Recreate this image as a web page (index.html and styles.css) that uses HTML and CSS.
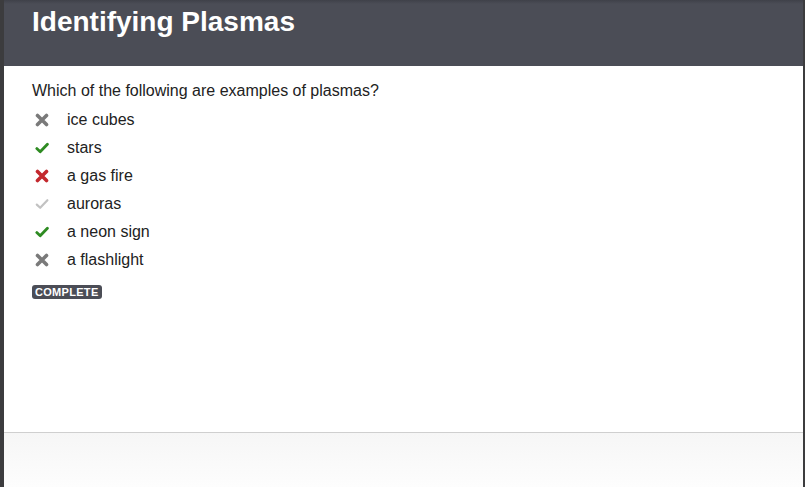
FILE: index.html
```html
<!DOCTYPE html>
<html>
<head>
<meta charset="utf-8">
<link rel="stylesheet" href="styles.css">
</head>
<body>
<div class="frame">
  <header class="header">
    <h1 class="title">Identifying Plasmas</h1>
  </header>
  <main class="content">
    <p class="question">Which of the following are examples of plasmas?</p>
    <ul class="answers">
      <li class="answer"><span class="icon"><svg viewBox="0 0 14 14" width="14" height="14"><path d="M2.5 2.5 L11.5 11.5 M11.5 2.5 L2.5 11.5" stroke="#7a7a7a" stroke-width="3.6" stroke-linecap="round"/></svg></span>ice cubes</li>
      <li class="answer"><span class="icon"><svg viewBox="0 0 14 14" width="14" height="14"><path d="M1.8 7.6 L5.2 10.8 L12.4 3.2" fill="none" stroke="#2e8b22" stroke-width="2.8" stroke-linecap="round" stroke-linejoin="round"/></svg></span>stars</li>
      <li class="answer"><span class="icon"><svg viewBox="0 0 14 14" width="14" height="14"><path d="M2.5 2.5 L11.5 11.5 M11.5 2.5 L2.5 11.5" stroke="#c3282d" stroke-width="3.6" stroke-linecap="round"/></svg></span>a gas fire</li>
      <li class="answer"><span class="icon"><svg viewBox="0 0 14 14" width="14" height="14"><path d="M1.8 7.6 L5.2 10.8 L12.4 3.2" fill="none" stroke="#c2c2c2" stroke-width="2.2" stroke-linecap="round" stroke-linejoin="round"/></svg></span>auroras</li>
      <li class="answer"><span class="icon"><svg viewBox="0 0 14 14" width="14" height="14"><path d="M1.8 7.6 L5.2 10.8 L12.4 3.2" fill="none" stroke="#2e8b22" stroke-width="2.8" stroke-linecap="round" stroke-linejoin="round"/></svg></span>a neon sign</li>
      <li class="answer"><span class="icon"><svg viewBox="0 0 14 14" width="14" height="14"><path d="M2.5 2.5 L11.5 11.5 M11.5 2.5 L2.5 11.5" stroke="#7a7a7a" stroke-width="3.6" stroke-linecap="round"/></svg></span>a flashlight</li>
    </ul>
    <span class="badge">COMPLETE</span>
  </main>
  <footer class="footer"></footer>
</div>
</body>
</html>
```
FILE: styles.css
```css
html, body {
  margin: 0;
  padding: 0;
  height: 100%;
}
body {
  font-family: "Liberation Sans", Arial, sans-serif;
  background: #ffffff;
}
.frame {
  height: 487px;
  box-sizing: border-box;
  border-left: 4px solid #3c3c3e;
  border-right: 2px solid #3c3c3e;
  display: flex;
  flex-direction: column;
}
.header {
  height: 66px;
  flex: none;
  background: linear-gradient(#3f4149 0px, #4b4d56 4px, #4b4d56 100%);
  box-sizing: border-box;
  padding: 6px 0 0 28px;
}
.title {
  margin: 0;
  font-size: 28px;
  line-height: 32px;
  font-weight: bold;
  color: #ffffff;
}
.content {
  flex: 1;
  padding: 15px 0 0 28px;
}
.question {
  margin: 0 0 5px 0;
  font-size: 16px;
  line-height: 20px;
  color: #222222;
}
.answers {
  list-style: none;
  margin: 0;
  padding: 0;
}
.answer {
  display: flex;
  align-items: center;
  height: 28px;
  font-size: 16px;
  color: #222222;
}
.icon {
  width: 35px;
  padding-left: 3px;
  box-sizing: border-box;
  display: flex;
  align-items: center;
}
.badge {
  display: inline-block;
  margin-top: 11px;
  background: #4b4d56;
  color: #ffffff;
  font-size: 11px;
  font-weight: bold;
  letter-spacing: 0.3px;
  line-height: 14px;
  padding: 0 3px 0 3px;
  border-radius: 3px;
}
.footer {
  height: 54px;
  flex: none;
  border-top: 1px solid #cfcfcf;
  background: linear-gradient(#f6f6f6, #fdfdfd);
}
```
